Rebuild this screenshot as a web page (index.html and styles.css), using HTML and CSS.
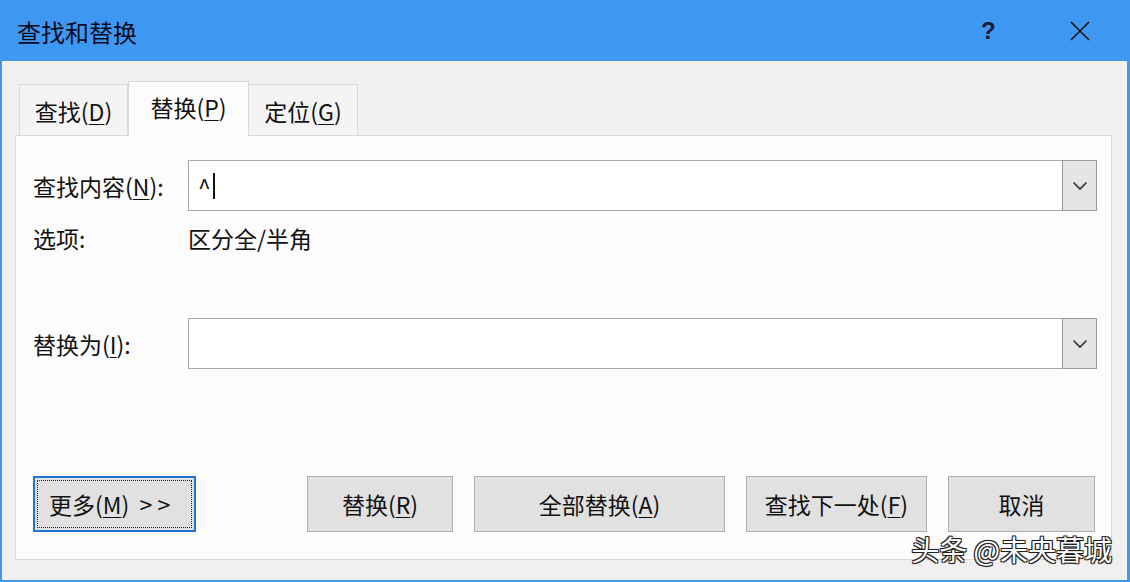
FILE: index.html
```html
<!DOCTYPE html>
<html lang="zh-CN">
<head>
    <meta charset="UTF-8">
    <title>查找和替换</title>
    <link rel="stylesheet" href="styles.css">
</head>
<body>
    <div class="window">
        <div class="titlebar">
            <span class="title">查找和替换</span>
            <span class="help">?</span>
            <span class="close">
                <svg width="22" height="22" viewBox="0 0 22 22"><path d="M2 2 L20 20 M20 2 L2 20" stroke="#111" stroke-width="1.6" fill="none"/></svg>
            </span>
        </div>

        <div class="content">
            <div class="tabs">
                <div class="tab">查找(<u>D</u>)</div>
                <div class="tab active">替换(<u>P</u>)</div>
                <div class="tab">定位(<u>G</u>)</div>
            </div>

            <div class="panel">
                <div class="row find-row">
                    <label class="label">查找内容(<u>N</u>):</label>
                    <div class="combo">
                        <div class="combo-text">^<span class="cursor"></span></div>
                        <div class="combo-btn">
                            <svg width="16" height="10" viewBox="0 0 16 10"><path d="M1.5 1.5 L8 8 L14.5 1.5" stroke="#333" stroke-width="1.7" fill="none"/></svg>
                        </div>
                    </div>
                </div>
                <div class="row options-row">
                    <span class="label">选项:</span>
                    <span class="option-value">区分全/半角</span>
                </div>
                <div class="row replace-row">
                    <label class="label">替换为(<u>I</u>):</label>
                    <div class="combo">
                        <div class="combo-text"></div>
                        <div class="combo-btn">
                            <svg width="16" height="10" viewBox="0 0 16 10"><path d="M1.5 1.5 L8 8 L14.5 1.5" stroke="#333" stroke-width="1.7" fill="none"/></svg>
                        </div>
                    </div>
                </div>

                <div class="buttons">
                    <button class="btn btn-more"><span class="focus-ring">更多(<u>M</u>) &nbsp;&gt; &gt;</span></button>
                    <div class="btn-group">
                        <button class="btn btn-replace">替换(<u>R</u>)</button>
                        <button class="btn btn-all">全部替换(<u>A</u>)</button>
                        <button class="btn btn-next">查找下一处(<u>F</u>)</button>
                        <button class="btn btn-cancel">取消</button>
                    </div>
                </div>
            </div>
        </div>

        <div class="watermark">头条 @未央暮城</div>
    </div>
</body>
</html>
```

FILE: styles.css
```css
body {
    margin: 0;
    font-family: 'Noto Sans CJK SC', sans-serif;
    color: #111;
    background-color: #3e97f1;
}
.window {
    position: relative;
    width: 1130px;
    height: 582px;
    box-sizing: border-box;
    border-left: 2px solid #3e97f1;
    border-right: 3px solid #3e97f1;
    border-bottom: 2px solid #3e97f1;
    background-color: #f0f0f0;
    display: flex;
    flex-direction: column;
}
.titlebar {
    height: 61px;
    flex: none;
    background-color: #3e97f1;
    display: flex;
    align-items: center;
    padding-left: 17px;
    margin-left: -2px;
    margin-right: -3px;
}
.title {
    font-size: 24px;
    color: #0b0b1e;
    flex: 1;
    padding-top: 1px;
}
.help {
    font-size: 24px;
    font-weight: bold;
    color: #1a1a3a;
    width: 22px;
    margin-right: 66px;
    font-family: 'Liberation Sans', sans-serif;
}
.close {
    width: 22px;
    height: 22px;
    margin-right: 39px;
    display: flex;
}
.content {
    flex: 1;
    padding: 19px 15px 20px 13px;
    display: flex;
    flex-direction: column;
}
.tabs {
    display: flex;
    align-items: flex-end;
    padding-left: 4px;
    height: 55px;
    flex: none;
}
.tab {
    height: 51px;
    box-sizing: border-box;
    border: 1px solid #d9d9d9;
    border-bottom: none;
    background-color: #f4f4f4;
    font-size: 23px;
    display: flex;
    align-items: center;
    justify-content: center;
    width: 109px;
    padding-top: 2px;
}
.tab + .tab {
    border-left: none;
}
.tab.active {
    height: 55px;
    width: 121px;
    background-color: #fcfcfc;
    border-left: 1px solid #d9d9d9;
    margin-bottom: -1px;
    position: relative;
    padding-bottom: 6px;
}
.tab.active + .tab {
    border-left: none;
}
u {
    text-decoration-thickness: 1px;
    text-underline-offset: 3px;
}
.panel {
    flex: 1;
    background-color: #fcfcfc;
    border: 1px solid #d9d9d9;
    padding: 24px 14px 0 17px;
    display: flex;
    flex-direction: column;
}
.row {
    display: flex;
    align-items: center;
}
.label {
    width: 155px;
    flex: none;
    font-size: 23px;
}
.combo {
    flex: 1;
    height: 51px;
    box-sizing: border-box;
    border: 1px solid #a9a9a9;
    background-color: #fff;
    display: flex;
}
.combo-text {
    flex: 1;
    font-size: 23px;
    padding-left: 9px;
    display: flex;
    align-items: center;
}
.cursor {
    display: inline-block;
    width: 2px;
    height: 26px;
    background-color: #111;
    margin-left: 2px;
}
.combo-btn {
    width: 33px;
    margin: -1px -1px -1px 0;
    border: 1px solid #9a9a9a;
    background-color: #e5e5e5;
    display: flex;
    align-items: center;
    justify-content: center;
}
.options-row {
    margin-top: 13px;
    height: 28px;
}
.option-value {
    font-size: 23px;
}
.replace-row {
    margin-top: 66px;
}
.buttons {
    margin-top: 107px;
    display: flex;
    align-items: center;
    padding-right: 2px;
}
.btn-group {
    margin-left: auto;
    display: flex;
    gap: 21px;
}
.btn {
    height: 56px;
    box-sizing: border-box;
    border: 1px solid #adadad;
    background-color: #e1e1e1;
    font-family: 'Noto Sans CJK SC', sans-serif;
    font-size: 23px;
    color: #111;
    padding: 0;
    display: flex;
    align-items: center;
    justify-content: center;
}
.btn-more {
    width: 163px;
    border: 2px solid #1f73d6;
    padding: 2px;
}
.focus-ring {
    flex: 1;
    align-self: stretch;
    border: 1px dotted #222;
    display: flex;
    align-items: center;
    padding-left: 11px;
    white-space: pre;
}
.btn-replace {
    width: 146px;
}
.btn-all {
    width: 251px;
}
.btn-next {
    width: 181px;
}
.btn-cancel {
    width: 147px;
}
.watermark {
    position: absolute;
    right: 15px;
    bottom: 11px;
    font-size: 28px;
    color: #fff;
    text-shadow: -1px -1px 0 #222, 1px -1px 0 #222, -1px 1px 0 #222, 1px 1px 0 #222, 0 0 2px #000;
}
```
